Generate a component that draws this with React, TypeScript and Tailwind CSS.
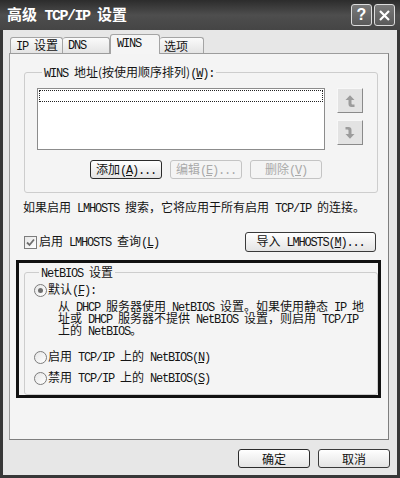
import React from "react";

// Latin runs use a monospace face squeezed to half-width, like the old SimSun look
function L({ children }: { children: React.ReactNode }) {
  return <span className="font-['Liberation_Mono',monospace] tracking-[-1.2px] whitespace-pre">{children}</span>;
}

function Btn({ children, disabled, strong, w = "w-[72px] h-[19px]" }: { children: React.ReactNode; disabled?: boolean; strong?: boolean; w?: string }) {
  return (
    <div
      className={`${w} rounded-[3px] flex items-center justify-center leading-none whitespace-pre ${
        disabled
          ? "border border-[#c4c4c4] bg-[#f4f4f4] text-[#a9a9a9]"
          : strong
          ? "border-[1.5px] border-[#2b2b2b] bg-gradient-to-b from-white to-[#e4e4e4] text-[#111]"
          : "border border-[#3a3a3a] bg-gradient-to-b from-white to-[#e4e4e4] text-[#111]"
      }`}
    >
      <span>{children}</span>
    </div>
  );
}

function Arrow({ down }: { down?: boolean }) {
  return (
    <svg width="12" height="14" viewBox="0 0 12 14" className={down ? "rotate-180" : ""}>
      <path d="M1.5 6 L6 1.2 L10.5 6 L7.5 6 L7.5 9.5 Q7.5 10.5 8.5 10.5 L10.5 10.5 L10.5 13 L7.5 13 Q4.5 13 4.5 10 L4.5 6 Z" fill="#9c9c9c" />
    </svg>
  );
}

function Radio({ on }: { on?: boolean }) {
  return (
    <div className="w-[13px] h-[13px] rounded-full border border-[#7c7c7c] bg-gradient-to-br from-[#e6e6e6] to-white flex items-center justify-center shrink-0">
      {on && <div className="w-[5px] h-[5px] rounded-full bg-[#6f6f6f]" />}
    </div>
  );
}

export default function App() {
  return (
    <div className="w-[400px] h-[478px] bg-[#383838] flex flex-col overflow-hidden font-['Noto_Sans_CJK_SC','Liberation_Sans',sans-serif] text-[12px] text-[#141414]">
      {/* 标题栏 */}
      <div className="h-[30px] shrink-0 flex items-center justify-between pl-[7px] pr-[5px] bg-gradient-to-b from-[#2c2c2c] via-[#4e4e4e] to-[#454545]">
        <div className="text-white font-bold text-[15px] leading-none whitespace-pre">
          高级<span className="font-['Liberation_Mono',monospace] tracking-[-1.5px]"> TCP/IP </span>设置
        </div>
        <div className="flex gap-[2px]">
          <div className="w-[21px] h-[22px] rounded-[3px] border border-[#dcdcdc] bg-gradient-to-b from-[#7a7a7a] to-[#5a5a5a] flex items-center justify-center text-white font-bold text-[16px] leading-none font-['Liberation_Sans',sans-serif]">
            ?
          </div>
          <div className="w-[21px] h-[22px] rounded-[3px] border border-[#dcdcdc] bg-gradient-to-b from-[#7a7a7a] to-[#5a5a5a] flex items-center justify-center">
            <svg width="13" height="13" viewBox="0 0 13 13">
              <path d="M2 2 L11 11 M11 2 L2 11" stroke="white" strokeWidth="2.2" />
            </svg>
          </div>
        </div>
      </div>

      {/* 主体 */}
      <div className="flex-1 mx-[3px] mb-[3px] bg-[#e7e7e7] flex flex-col pl-[6px] pr-[8px] pt-[4px]">
        {/* 选项卡 */}
        <div className="h-[19px] flex items-end pl-[1px] relative z-10">
          <div className="w-[53px] h-[16px] border border-b-0 border-[#a4a4a4] rounded-t-[3px] bg-gradient-to-b from-[#fafafa] to-[#e4e4e4] flex items-center pl-[5px] leading-none">
            <span>
              <L>IP </L>设置
            </span>
          </div>
          <div className="w-[47px] h-[16px] border border-b-0 border-l-0 border-[#a4a4a4] rounded-t-[3px] bg-gradient-to-b from-[#fafafa] to-[#e4e4e4] flex items-center pl-[5px] leading-none">
            <L>DNS</L>
          </div>
          <div className="w-[50px] h-[20px] -mb-px border border-b-0 border-[#a4a4a4] rounded-t-[3px] bg-[#f5f5f5] flex items-start pt-[3px] pl-[6px] leading-none">
            <L>WINS</L>
          </div>
          <div className="w-[44px] h-[16px] border border-b-0 border-l-0 border-[#a4a4a4] rounded-t-[3px] bg-gradient-to-b from-[#fafafa] to-[#e4e4e4] flex items-center pl-[4px] leading-none">
            选项
          </div>
        </div>

        {/* 面板 */}
        <div className="w-[380px] h-[387px] border border-[#9c9c9c] border-r-[#7e7e7e] border-b-[#7e7e7e] bg-[#f4f4f4] flex flex-col">
          <fieldset className="ml-[14px] mt-[11px] w-[354px] h-[128px] border border-[#cdcdcd] rounded-[3px] pl-[12px]">
            <legend className="ml-[5px] px-[2px] h-[14px] leading-[14px]">
              <L>WINS </L>地址(按使用顺序排列)<L>(<u>W</u>):</L>
            </legend>
            <div className="mt-[9px] flex gap-[12px]">
              <div className="w-[288px] h-[62px] border border-[#8c8c8c] bg-white p-[1px]">
                <div className="h-[12px] border border-dotted border-[#222]" />
              </div>
              <div className="flex flex-col gap-[7px]">
                <div className="w-[26px] h-[25px] border border-[#f8f8f8] border-r-[#8a8a8a] border-b-[#8a8a8a] bg-[#e3e3e3] flex items-center justify-center">
                  <Arrow />
                </div>
                <div className="w-[26px] h-[25px] border border-[#f8f8f8] border-r-[#8a8a8a] border-b-[#8a8a8a] bg-[#e3e3e3] flex items-center justify-center">
                  <Arrow down />
                </div>
              </div>
            </div>
            <div className="mt-[10px] ml-[53px] flex gap-[8px]">
              <Btn strong>
                添加<L>(<u>A</u>)...</L>
              </Btn>
              <Btn disabled>
                编辑<L>(<u>E</u>)...</L>
              </Btn>
              <Btn disabled>
                删除<L>(<u>V</u>)</L>
              </Btn>
            </div>
          </fieldset>

          <div className="mt-[7px] ml-[13px] h-[14px] leading-[14px] whitespace-nowrap">
            如果启用<L> LMHOSTS </L>搜索，它将应用于所有启用<L> TCP/IP </L>的连接。
          </div>

          <div className="mt-[18px] ml-[14px] mr-[12px] h-[20px] flex items-center justify-between">
            <div className="flex items-center gap-[2px] h-[14px] leading-[14px]">
              <div className="w-[13px] h-[13px] border border-[#7c7c7c] bg-gradient-to-br from-[#e6e6e6] to-white flex items-center justify-center">
                <svg width="9" height="9" viewBox="0 0 9 9">
                  <path d="M1 4.5 L3.5 7 L8 1.5" stroke="#6e6e6e" strokeWidth="1.8" fill="none" />
                </svg>
              </div>
              <span>
                启用<L> LMHOSTS </L>查询<L>(<u>L</u>)</L>
              </span>
            </div>
            <Btn w="w-[131px] h-[20px]">
              导入<L> LMHOSTS(<u>M</u>)...</L>
            </Btn>
          </div>

          {/* NetBIOS 设置（黑框标注） */}
          <div className="mt-[8px] ml-[6px] w-[365px] h-[138px] border-[3px] border-[#111] pl-[5px] pt-[2px]">
            <fieldset className="w-[354px] h-[130px] border border-[#cdcdcd] rounded-[3px] pl-[9px]">
              <legend className="ml-[5px] px-[2px] h-[14px] leading-[14px]">
                <L>NetBIOS </L>设置
              </legend>
              <div className="mt-[4px] h-[14px] flex items-center gap-[1px] leading-[14px]">
                <Radio on />
                <span>
                  默认<L>(<u>F</u>):</L>
                </span>
              </div>
              <div className="mt-[3px] ml-[24px] leading-[12px] whitespace-nowrap">
                <div className="h-[12px]">
                  从<L> DHCP </L>服务器使用<L> NetBIOS </L>设置。如果使用静态<L> IP </L>地
                </div>
                <div className="h-[12px]">
                  址或<L> DHCP </L>服务器不提供<L> NetBIOS </L>设置，则启用<L> TCP/IP</L>
                </div>
                <div className="h-[12px]">
                  上的<L> NetBIOS</L>。
                </div>
              </div>
              <div className="mt-[14px] h-[14px] flex items-center gap-[1px] leading-[14px]">
                <Radio />
                <span>
                  启用<L> TCP/IP </L>上的<L> NetBIOS(<u>N</u>)</L>
                </span>
              </div>
              <div className="mt-[7px] h-[14px] flex items-center gap-[1px] leading-[14px]">
                <Radio />
                <span>
                  禁用<L> TCP/IP </L>上的<L> NetBIOS(<u>S</u>)</L>
                </span>
              </div>
            </fieldset>
          </div>
        </div>

        {/* 底部按钮 */}
        <div className="mt-[9px] -mr-px flex justify-end gap-[8px]">
          <Btn strong>确定</Btn>
          <Btn>取消</Btn>
        </div>
      </div>
    </div>
  );
}
